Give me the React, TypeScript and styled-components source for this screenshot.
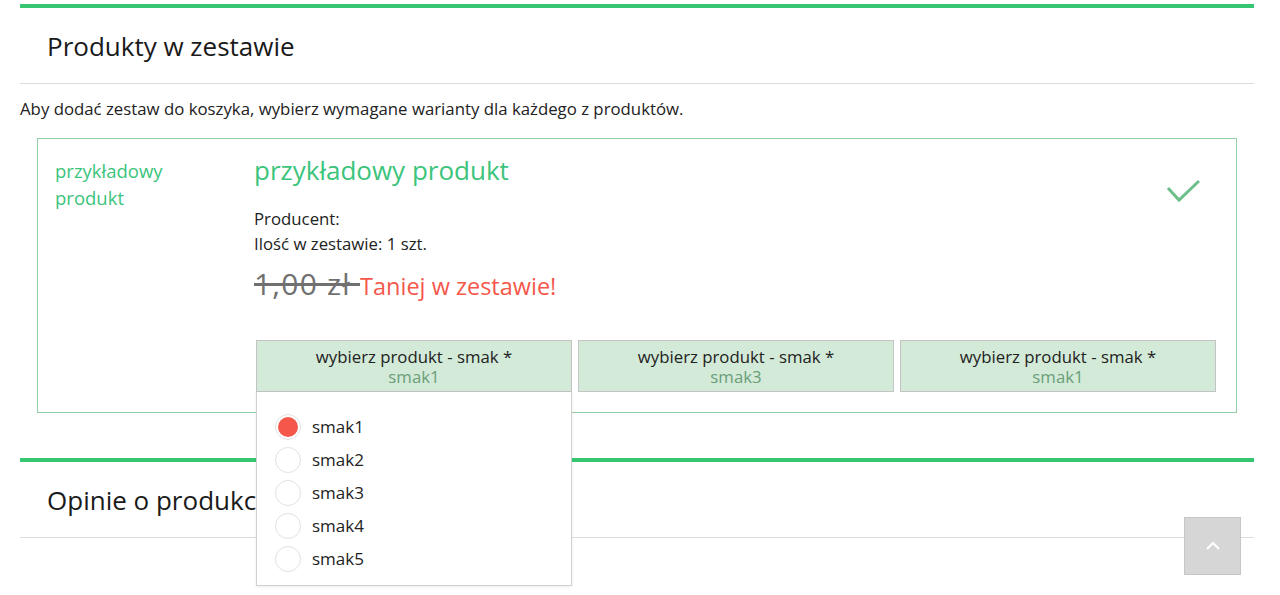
import React from "react";
import styled, { createGlobalStyle } from "styled-components";

const GlobalStyle = createGlobalStyle`
  body {
    margin: 0;
    background: #fff;
    font-family: "Open Sans", "Liberation Sans", sans-serif;
    color: #222;
  }
`;

const Page = styled.div`
  width: 1234px;
  padding: 4px 0 80px 20px;
`;

const Section = styled.section`
  border-top: 4px solid #36c671;
`;

const SectionHeader = styled.div`
  height: 75px;
  display: flex;
  align-items: center;
  padding-left: 27px;
  font-size: 26px;
  color: #1a1a1a;
  border-bottom: 1px solid #dcdcdc;
`;

const Intro = styled.p`
  margin: 13px 0 17px;
  font-size: 16.8px;
  line-height: 24px;
`;

const ProductBox = styled.div`
  margin: 0 17px 45px;
  border: 1px solid #93cfa4;
  display: grid;
  grid-template-columns: 199px 1fr;
  padding: 18px 20px 20px 17px;
`;

const SideName = styled.div`
  color: #3cc47c;
  font-size: 18.5px;
  line-height: 27px;
`;

const Details = styled.div`
  display: flex;
  flex-direction: column;
`;

const TitleRow = styled.div`
  display: flex;
  justify-content: space-between;
  align-items: flex-start;
`;

const Title = styled.h2`
  margin: 0;
  font-weight: 400;
  font-size: 26px;
  line-height: 26px;
  color: #3cc47c;
`;

const Check = styled.svg`
  width: 36px;
  height: 24px;
  margin: 22px 14px -20px 0;
`;

const Info = styled.div`
  margin-top: 23px;
  font-size: 16.8px;
  line-height: 25px;
`;

const PriceRow = styled.div`
  display: flex;
  align-items: baseline;
  margin-top: 10px;
  line-height: 36px;
`;

const OldPrice = styled.span`
  font-size: 30px;
  letter-spacing: 1.2px;
  color: #707070;
  text-decoration: line-through;
  white-space: pre;
`;

const Cheaper = styled.span`
  font-size: 23.5px;
  color: #f5574b;
`;

const Selects = styled.div`
  display: grid;
  grid-template-columns: repeat(3, 1fr);
  gap: 6px;
  margin: 36px 0 0 2px;
`;

const SelectWrap = styled.div`
  position: relative;
`;

const SelectBox = styled.div`
  height: 52px;
  box-sizing: border-box;
  background: #d3ead8;
  border: 1px solid #c4c4c4;
  text-align: center;
  font-size: 16.8px;
  line-height: 20px;
  padding-top: 6px;
`;

const Chosen = styled.div`
  color: #6a9e78;
`;

const Dropdown = styled.div`
  position: absolute;
  top: 52px;
  left: 0;
  right: 0;
  z-index: 5;
  background: #fff;
  border: 1px solid #d0d0d0;
  border-top: none;
  padding: 18px 18px 10px;
  box-shadow: 0 1px 3px rgba(0, 0, 0, 0.08);
`;

const Option = styled.label`
  display: flex;
  align-items: center;
  gap: 11px;
  height: 33px;
  font-size: 17px;
  color: #222;
`;

const Radio = styled.span<{ $on?: boolean }>`
  width: 26px;
  height: 26px;
  box-sizing: border-box;
  border-radius: 50%;
  border: 1px solid #e2e2e2;
  background: #fff;
  display: flex;
  align-items: center;
  justify-content: center;
  &::after {
    content: "";
    width: 20px;
    height: 20px;
    border-radius: 50%;
    background: ${(p) => (p.$on ? "#f5574b" : "transparent")};
  }
`;

const ToTop = styled.button`
  position: fixed;
  right: 39px;
  bottom: 20px;
  width: 57px;
  height: 58px;
  background: #d6d6d6;
  border: 1px solid #c6c6c6;
  display: flex;
  align-items: center;
  justify-content: center;
  padding: 0;
`;

const flavours = ["smak1", "smak2", "smak3", "smak4", "smak5"];

const App: React.FC = () => {
  return (
    <>
      <GlobalStyle />
      <Page>
        <Section>
          <SectionHeader>Produkty w zestawie</SectionHeader>
          <Intro>
            Aby dodać zestaw do koszyka, wybierz wymagane warianty dla każdego z
            produktów.
          </Intro>
          <ProductBox>
            <SideName>
              przykładowy
              <br />
              produkt
            </SideName>
            <Details>
              <TitleRow>
                <Title>przykładowy produkt</Title>
                <Check viewBox="0 0 36 24">
                  <polyline
                    points="2,9 13,21 33,2"
                    fill="none"
                    stroke="#6dbf8a"
                    strokeWidth="3"
                  />
                </Check>
              </TitleRow>
              <Info>
                Producent:
                <br />
                Ilość w zestawie: 1 szt.
              </Info>
              <PriceRow>
                <OldPrice>1,00 zł </OldPrice>
                <Cheaper>Taniej w zestawie!</Cheaper>
              </PriceRow>
              <Selects>
                <SelectWrap>
                  <SelectBox>
                    wybierz produkt - smak *<Chosen>smak1</Chosen>
                  </SelectBox>
                  <Dropdown>
                    {flavours.map((f, i) => (
                      <Option key={f}>
                        <Radio $on={i === 0} />
                        {f}
                      </Option>
                    ))}
                  </Dropdown>
                </SelectWrap>
                <SelectWrap>
                  <SelectBox>
                    wybierz produkt - smak *<Chosen>smak3</Chosen>
                  </SelectBox>
                </SelectWrap>
                <SelectWrap>
                  <SelectBox>
                    wybierz produkt - smak *<Chosen>smak1</Chosen>
                  </SelectBox>
                </SelectWrap>
              </Selects>
            </Details>
          </ProductBox>
        </Section>
        <Section>
          <SectionHeader>Opinie o produkcie</SectionHeader>
        </Section>
      </Page>
      <ToTop aria-label="Do góry">
        <svg width="16" height="10" viewBox="0 0 16 10">
          <polyline
            points="2,8 8,2 14,8"
            fill="none"
            stroke="#fff"
            strokeWidth="2"
          />
        </svg>
      </ToTop>
    </>
  );
};

export default App;
